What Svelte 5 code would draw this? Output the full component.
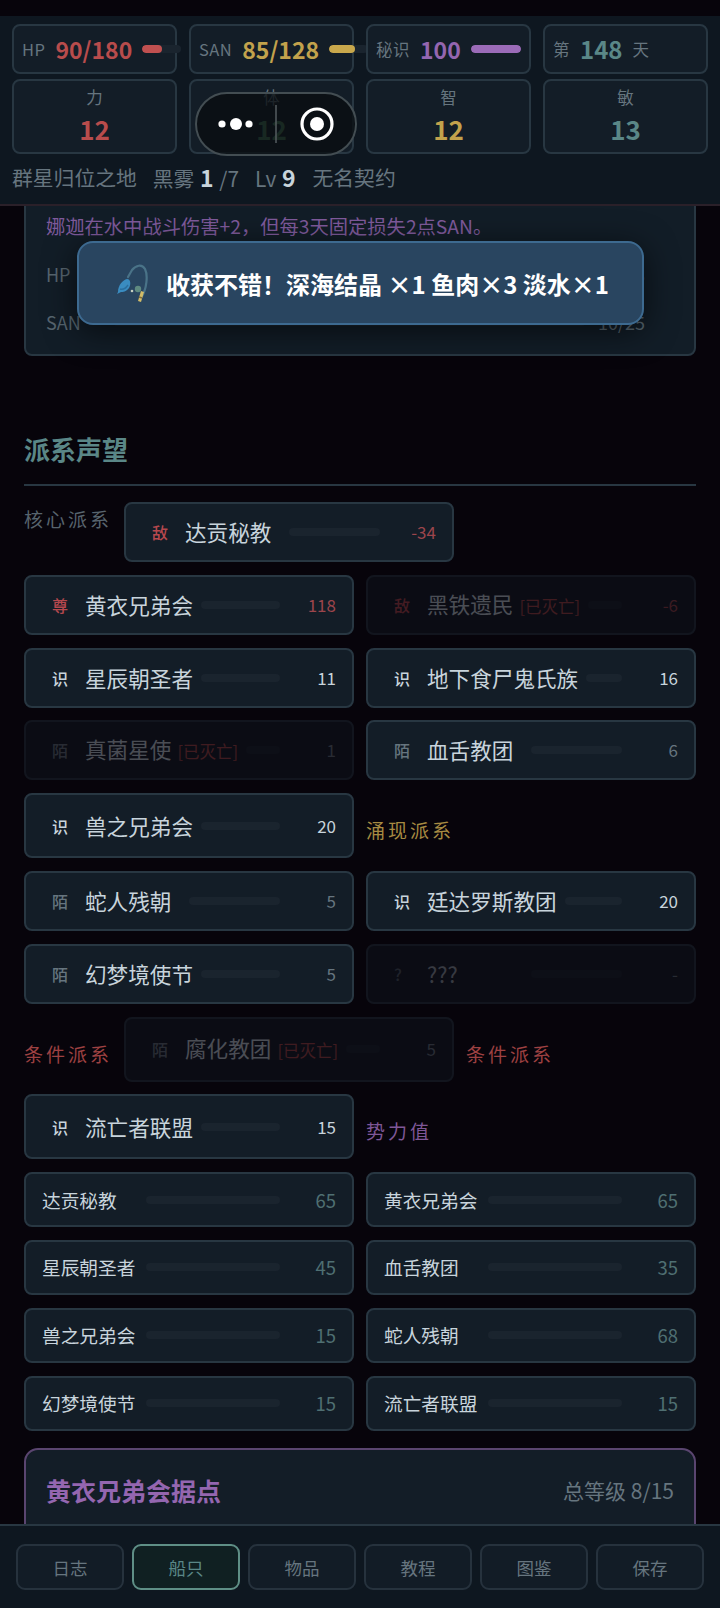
<script>
  const stats = [
    { label: 'HP', value: '90/180', tone: 'red', pct: 50 },
    { label: 'SAN', value: '85/128', tone: 'gold', pct: 66 },
    { label: '秘识', value: '100', tone: 'purple', pct: 100 }
  ];
  const attrs = [
    { label: '力', value: 12, tone: 'red' },
    { label: '体', value: 12, tone: 'green' },
    { label: '智', value: 12, tone: 'gold' },
    { label: '敏', value: 13, tone: 'teal' }
  ];
  const factions = [
    { heading: '核心派系', tone: 'muted', first: true },
    { rank: '敌', name: '达贡秘教', value: '-34', tone: 'enemy' },
    { rank: '尊', name: '黄衣兄弟会', value: '118', tone: 'enemy' },
    { rank: '敌', name: '黑铁遗民', value: '-6', tone: 'enemy', dead: true },
    { rank: '识', name: '星辰朝圣者', value: '11', tone: 'known' },
    { rank: '识', name: '地下食尸鬼氏族', value: '16', tone: 'known' },
    { rank: '陌', name: '真菌星使', value: '1', tone: 'stranger', dead: true },
    { rank: '陌', name: '血舌教团', value: '6', tone: 'stranger' },
    { rank: '识', name: '兽之兄弟会', value: '20', tone: 'known' },
    { heading: '涌现派系', tone: 'gold' },
    { rank: '陌', name: '蛇人残朝', value: '5', tone: 'stranger' },
    { rank: '识', name: '廷达罗斯教团', value: '20', tone: 'known' },
    { rank: '陌', name: '幻梦境使节', value: '5', tone: 'stranger' },
    { rank: '?', name: '???', value: '-', tone: 'stranger', hidden: true },
    { heading: '条件派系', tone: 'red' },
    { rank: '陌', name: '腐化教团', value: '5', tone: 'stranger', dead: true },
    { heading: '条件派系', tone: 'red' },
    { rank: '识', name: '流亡者联盟', value: '15', tone: 'known' },
    { heading: '势力值', tone: 'purple' }
  ];
  const powers = [
    ['达贡秘教', 65], ['黄衣兄弟会', 65], ['星辰朝圣者', 45], ['血舌教团', 35],
    ['兽之兄弟会', 15], ['蛇人残朝', 68], ['幻梦境使节', 15], ['流亡者联盟', 15]
  ];
  const tabs = ['日志', '船只', '物品', '教程', '图鉴', '保存'];
</script>

<div class="page">
  <header class="top">
    <div class="grid">
      {#each stats as s}
        <div class="cell stat">
          <span class="lab">{s.label}</span>
          <b class="num {s.tone}">{s.value}</b>
          <span class="mini"><i class="fill-{s.tone}" style="width:{s.pct}%"></i></span>
        </div>
      {/each}
      <div class="cell stat">
        <span class="lab">第</span>
        <b class="num day teal">148</b>
        <span class="lab">天</span>
      </div>
      {#each attrs as a}
        <div class="cell attr">
          <span class="attr-lab">{a.label}</span>
          <b class="attr-num {a.tone}">{a.value}</b>
        </div>
      {/each}
    </div>
    <div class="info">
      <span>群星归位之地</span>
      <span>黑雾 <b>1</b> /7</span>
      <span>Lv <b>9</b></span>
      <span>无名契约</span>
    </div>
  </header>

  <main class="content">
    <section class="panel">
      <p class="note">娜迦在水中战斗伤害+2，但每3天固定损失2点SAN。</p>
      <div class="meter"><span>HP</span><span class="meter-track"></span><span>18/23</span></div>
      <div class="meter"><span>SAN</span><span class="meter-track"></span><span>10/25</span></div>
    </section>

    <h2 class="title">派系声望</h2>

    <div class="flow">
      {#each factions as f}
        {#if f.heading}
          <div class="heading {f.tone}" class:first={f.first}>{f.heading}</div>
        {:else}
          <div class="chip" class:dim={f.dead || f.hidden}>
            <span class="rank {f.tone}" class:faint={f.hidden}>{f.rank}</span>
            <span class="name" class:faint={f.hidden}>{f.name}{#if f.dead}<em>[已灭亡]</em>{/if}</span>
            <span class="track"></span>
            <span class="val {f.tone}">{f.value}</span>
          </div>
        {/if}
      {/each}
      {#each powers as p}
        <div class="chip small">
          <span class="name">{p[0]}</span>
          <span class="track"></span>
          <span class="val power">{p[1]}</span>
        </div>
      {/each}
    </div>

    <section class="base">
      <h3>黄衣兄弟会据点</h3>
      <span>总等级 8/15</span>
    </section>
  </main>

  <nav class="tabs">
    {#each tabs as t, i}
      <button class:active={i === 1}>{t}</button>
    {/each}
  </nav>

  <div class="capsule">
    <svg width="160" height="63" viewBox="0 0 160 63" aria-hidden="true">
      <circle cx="26" cy="31" r="3.6" fill="#fff" />
      <circle cx="40" cy="31" r="6" fill="#fff" />
      <circle cx="53" cy="31" r="3.6" fill="#fff" />
      <path d="M80 12v38" stroke="#565d61" stroke-width="1.5" />
      <circle cx="121" cy="31" r="15" fill="none" stroke="#fff" stroke-width="3.2" />
      <circle cx="121" cy="31" r="7" fill="#fff" />
    </svg>
  </div>

  <div class="toast">
    <svg class="rod" width="36" height="44" viewBox="-3 0 36 44" aria-hidden="true">
      <path d="M26 37C32 28 33 14 30 8 27 3 21 4 17 9L13 16" fill="none" stroke="#4a7388" stroke-width="2.2" stroke-linecap="round" />
      <path d="M3 31c0-7 5-12 9-13 4 0 4 6 2 9-3 4-6 4-8 4l-4 2z" fill="#3a8cc0" />
      <path d="M5 28c3 1 6-1 8-4" fill="none" stroke="#2a6f9f" stroke-width="1.4" />
      <circle cx="23" cy="28" r="3.2" fill="#5f8a80" />
      <circle cx="17" cy="30" r="1.3" fill="#c5cfc0" />
      <path d="M26 30l3 1-3 10-3-1z" fill="#d2bc68" />
      <path d="M24 36l3 1" stroke="#7f6a3a" stroke-width="1.4" />
    </svg>
    <span>收获不错！深海结晶 ×1 鱼肉×3 淡水×1</span>
  </div>
</div>

<style>
  :global(body) {
    margin: 0;
    background: #07040b;
  }
  .page {
    position: relative;
    height: 1608px;
    overflow: hidden;
    background: #07040b;
    font-family: "Noto Sans CJK SC", "Noto Sans", sans-serif;
    color: #c8d4dc;
  }

  .top {
    position: absolute;
    z-index: 2;
    top: 16px;
    left: 0;
    right: 0;
    height: 190px;
    box-sizing: border-box;
    padding: 8px 12px 0;
    background: #0e1720;
    border-bottom: 2px solid #2a2029;
  }
  .grid {
    display: grid;
    grid-template-columns: repeat(4, minmax(0, 1fr));
    row-gap: 5px;
    column-gap: 12px;
  }
  .cell {
    box-sizing: border-box;
    background: #131d27;
    border: 2px solid #283742;
    border-radius: 8px;
  }
  .stat {
    height: 50px;
    display: flex;
    align-items: center;
    gap: 10px;
    padding: 0 8px;
  }
  .lab {
    font-size: 16.5px;
    letter-spacing: 0.5px;
    color: #66757f;
    white-space: nowrap;
    flex: none;
  }
  .num {
    font-size: 23px;
    font-weight: 700;
    line-height: 1;
    flex: none;
  }
  .num.day {
    font-size: 24px;
  }
  .mini {
    flex: 1 0 39px;
    height: 8px;
    border-radius: 4px;
    background: #1a242e;
    overflow: hidden;
  }
  .mini i {
    display: block;
    height: 100%;
    border-radius: 4px;
  }
  .fill-red { background: #c05050; }
  .fill-gold { background: #c9a84c; }
  .fill-purple { background: #9b6bb8; }

  .attr {
    height: 75px;
    display: flex;
    flex-direction: column;
    align-items: center;
    justify-content: center;
    gap: 5px;
    padding-bottom: 5px;
  }
  .attr-lab {
    font-size: 16.5px;
    line-height: 24px;
    color: #66757f;
  }
  .attr-num {
    font-size: 26px;
    line-height: 30px;
    font-weight: 700;
  }

  .red { color: #b84c4c; }
  .gold { color: #c2a24c; }
  .purple { color: #9466b0; }
  .teal { color: #5a8787; }
  .green { color: #4f8a5f; }
  .muted { color: #66757f; }

  .info {
    display: flex;
    gap: 16px;
    margin-top: 8px;
    font-size: 20.8px;
    line-height: 30px;
    color: #66757f;
    white-space: nowrap;
  }
  .info b {
    color: #c8d4dc;
    font-size: 23px;
    font-weight: 700;
    margin: 0 1px;
  }

  .content {
    padding: 186px 24px 0;
  }
  .panel {
    box-sizing: border-box;
    height: 170px;
    padding: 21px 22px 0 20px;
    background: #121d27;
    border: 2px solid #283742;
    border-radius: 8px;
  }
  .note {
    margin: 0 0 7px;
    font-size: 19.3px;
    line-height: 34px;
    color: #7f5a9c;
    white-space: nowrap;
  }
  .meter {
    display: flex;
    align-items: center;
    gap: 12px;
    height: 48px;
    padding-right: 27px;
    font-size: 18px;
    color: #56646e;
  }
  .meter-track {
    flex: 1;
    height: 8px;
    border-radius: 4px;
    background: #1a242e;
    margin-left: 20px;
  }

  .title {
    margin: 74px 0 16px;
    padding-bottom: 16px;
    border-bottom: 2px solid #283742;
    font-size: 26px;
    line-height: 38px;
    font-weight: 700;
    color: #5a8787;
  }

  .flow {
    display: flex;
    flex-wrap: wrap;
    gap: 12.8px 12px;
  }
  .heading {
    box-sizing: border-box;
    height: 65px;
    padding-top: 20px;
    font-size: 19px;
    line-height: 34px;
    letter-spacing: 3px;
    white-space: nowrap;
    opacity: 0.85;
  }
  .heading.first {
    height: auto;
    padding-top: 0;
    width: 88px;
  }
  .chip {
    box-sizing: border-box;
    width: calc(50% - 6px);
    min-height: 60px;
    display: flex;
    align-items: center;
    padding: 0 16px;
    background: #131d27;
    border: 2px solid #283742;
    border-radius: 8px;
  }
  .chip.dim {
    opacity: 0.35;
  }
  .rank {
    flex: none;
    width: 43px;
    padding-left: 10px;
    box-sizing: border-box;
    text-align: left;
    font-size: 16px;
    font-weight: 500;
  }
  .name {
    flex: none;
    min-width: 96px;
    margin-right: 8px;
    font-size: 21.6px;
    line-height: 34px;
    white-space: nowrap;
    color: #c8d4dc;
  }
  .name em {
    margin-left: 6px;
    font-style: normal;
    font-size: 16.5px;
    color: #a84848;
  }
  .track {
    flex: 1;
    min-width: 0;
    height: 8px;
    border-radius: 4px;
    background: #1a242e;
  }
  .val {
    flex: none;
    width: 56px;
    text-align: right;
    font-size: 17px;
    line-height: 26px;
  }
  .enemy { color: #b5484e; }
  .val.enemy { color: #9c454c; }
  .known { color: #c8d4dc; }
  .stranger { color: #66757f; }
  .faint { opacity: 0.7; }
  .chip.small {
    min-height: 55px;
  }
  .small .name {
    min-width: 93.5px;
    margin-right: 10px;
    font-size: 18.7px;
  }
  .val.power {
    font-size: 18.5px;
    color: #4f6f72;
  }

  .base {
    box-sizing: border-box;
    height: 200px;
    margin-top: 17px;
    padding: 20px 20px;
    display: flex;
    justify-content: space-between;
    align-items: flex-start;
    background: #131d27;
    border: 2px solid #5a4570;
    border-radius: 14px;
  }
  .base h3 {
    margin: 0;
    font-size: 25px;
    line-height: 40px;
    font-weight: 700;
    color: #9466b0;
  }
  .base span {
    font-size: 21px;
    line-height: 40px;
    color: #66757f;
  }

  .tabs {
    position: absolute;
    z-index: 2;
    left: 0;
    right: 0;
    bottom: 0;
    height: 84px;
    box-sizing: border-box;
    padding: 18px 16px 0;
    display: grid;
    grid-template-columns: repeat(6, minmax(0, 1fr));
    column-gap: 8px;
    align-items: start;
    background: #0e1720;
    border-top: 2px solid #283742;
  }
  .tabs button {
    height: 46px;
    padding: 0;
    font: inherit;
    font-size: 17.5px;
    color: #66757f;
    background: #121c26;
    border: 2px solid #26323d;
    border-radius: 9px;
  }
  .tabs button.active {
    color: #5a8787;
    background: #102022;
    border-color: #5f8f86;
  }

  .capsule {
    position: absolute;
    z-index: 3;
    left: 195px;
    top: 92px;
    width: 162px;
    height: 64px;
    box-sizing: border-box;
    border: 2px solid #434d52;
    border-radius: 32px;
    background: rgba(9, 13, 17, 0.78);
    line-height: 0;
  }
  .capsule svg {
    margin: -1.5px 0 0 -1px;
  }

  .toast {
    position: absolute;
    z-index: 1;
    left: 77px;
    top: 241px;
    width: 567px;
    height: 84px;
    box-sizing: border-box;
    display: flex;
    align-items: center;
    justify-content: center;
    gap: 18px;
    background: #294560;
    border: 2px solid #3d6a90;
    border-radius: 16px;
    box-shadow: 0 6px 32px rgba(0, 0, 0, 0.6);
    color: #fff;
    font-size: 24px;
    font-weight: 700;
    white-space: nowrap;
  }
  .rod {
    flex: none;
  }
</style>
